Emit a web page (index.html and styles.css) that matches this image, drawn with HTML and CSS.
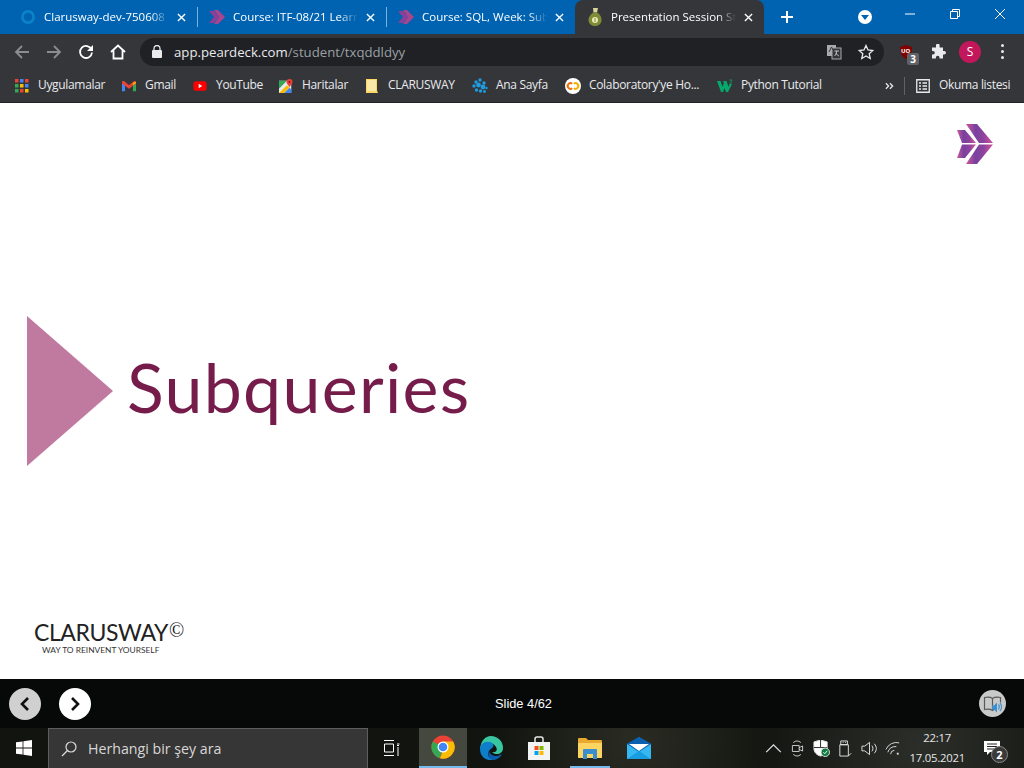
FILE: index.html
```html
<!DOCTYPE html>
<html lang="tr">
<head>
  <meta charset="utf-8">
  <title>Presentation Session Student</title>
  <link rel="stylesheet" href="styles.css">
</head>
<body>
<div class="screen">

  <!-- tabs -->
  <div class="tabstrip">
    <div class="tab">
      <svg class="fav" viewBox="0 0 16 16"><circle cx="8" cy="8" r="5.6" fill="none" stroke="#0a84c6" stroke-width="2.6"/></svg>
      <span class="tab-title">Clarusway-dev-750608</span>
      <svg class="tab-x" viewBox="0 0 10 10"><path d="M1 1l8 8M9 1l-8 8"/></svg>
    </div>
    <div class="tab sep">
      <svg class="fav" viewBox="0 0 16 16"><path d="M0 2h5l5 6-5 6H0l5-6z" fill="#8a4098"/><path d="M5 1h4l7 7-7 7H5l5-7z" fill="#a8458e"/></svg>
      <span class="tab-title">Course: ITF-08/21 Learn</span>
      <svg class="tab-x" viewBox="0 0 10 10"><path d="M1 1l8 8M9 1l-8 8"/></svg>
    </div>
    <div class="tab sep">
      <svg class="fav" viewBox="0 0 16 16"><path d="M0 2h5l5 6-5 6H0l5-6z" fill="#8a4098"/><path d="M5 1h4l7 7-7 7H5l5-7z" fill="#a8458e"/></svg>
      <span class="tab-title">Course: SQL, Week: Sub</span>
      <svg class="tab-x" viewBox="0 0 10 10"><path d="M1 1l8 8M9 1l-8 8"/></svg>
    </div>
    <div class="tab active">
      <svg class="fav pear" viewBox="0 0 14 18"><path d="M5 0h5L9 4.500H5.500z" fill="#d8d49a"/><path d="M5 4.500h4.500c3 2.500 4.500 5.500 4 8.500-.5 3-3.500 5-6.500 5S1 16 .5 13C0 10 2 7 5 4.500z" fill="#7f8c35"/><circle cx="7" cy="12" r="3" fill="#eceab8"/><path d="M7 10v4" stroke="#7f8c35"/></svg>
      <span class="tab-title">Presentation Session Stu</span>
      <svg class="tab-x" viewBox="0 0 10 10"><path d="M1 1l8 8M9 1l-8 8"/></svg>
    </div>
    <svg class="new-tab" viewBox="0 0 12 12"><path d="M6 0v12M0 6h12"/></svg>
    <div class="strip-right">
      <span class="profile-drop"><svg viewBox="0 0 14 14"><circle cx="7" cy="7" r="7" fill="#fff"/><path d="M3 5h8l-4 5z" fill="#0063b1"/></svg></span>
      <div class="winbtns">
        <svg viewBox="0 0 12 12"><path d="M1 6h10"/></svg>
        <svg viewBox="0 0 12 12"><path d="M1.500 3.500h7v7h-7zM3.500 3.500v-2h7v7h-2"/></svg>
        <svg viewBox="0 0 12 12"><path d="M1 1l10 10M11 1l-10 10"/></svg>
      </div>
    </div>
  </div>

  <!-- address bar -->
  <div class="toolbar">
    <svg class="nav" viewBox="0 0 16 16"><path class="dim" d="M15 8H2M8 2L2 8l6 6"/></svg>
    <svg class="nav" viewBox="0 0 16 16"><path class="dim" d="M1 8h13M8 2l6 6-6 6"/></svg>
    <svg class="nav" viewBox="0 0 16 16"><path d="M13.500 5.500A6 6 0 1 0 14 8.500"/><path class="solid" d="M15 1v6H9z"/></svg>
    <svg class="nav" viewBox="0 0 16 16"><path d="M1 8l7-6.500L15 8M3.500 6.500V14.500h9V6.500"/></svg>
    <div class="omnibox">
      <svg class="lock" viewBox="0 0 10 13"><path d="M2 5V3.500a3 3 0 0 1 6 0V5" fill="none" stroke="#e8eaed" stroke-width="1.300"/><rect y="5" width="10" height="8" rx="1" fill="#e8eaed"/></svg>
      <span class="url">app.peardeck.com<span class="url-path">/student/txqddldyy</span></span>
      <svg class="translate" viewBox="0 0 16 16"><rect x="1" y="1" width="9" height="11" fill="#a8abae"/><rect x="6" y="4" width="9" height="11" fill="#35363a" stroke="#a8abae"/><path d="M8.500 7h4.500M10.500 7c0 3-1 4-2 5M10 9c.5 1.500 2 2.500 3 3" fill="none" stroke="#c4c7c5"/><path d="M3 8l2.500-5L7 6" fill="none" stroke="#35363a"/></svg>
      <svg class="star" viewBox="0 0 16 16"><path d="M8 1.500l2 4.500 4.800.5-3.600 3.200 1 4.800L8 12l-4.200 2.500 1-4.800L1.200 6.500 6 6z"/></svg>
    </div>
    <div class="ext ublock">
      <svg viewBox="0 0 16 16"><path d="M8 1l6 2c0 6-1.500 9.500-6 12C3.500 12.500 2 9 2 3z" fill="#800000"/></svg>
      <span class="ub-text">UO</span>
      <span class="badge">3</span>
    </div>
    <svg class="ext puzzle" viewBox="0 0 16 16"><path d="M6 1.500a1.800 1.800 0 0 1 3.600 0V3.500h3.400V7h1.200a1.800 1.800 0 0 1 0 3.600H13V14.500H9.500v-1a1.800 1.800 0 0 0-3.600 0v1H2V10.500h1a1.800 1.800 0 0 0 0-3.600H2V3.500h4z" fill="#e8eaed"/></svg>
    <span class="avatar">S</span>
    <span class="dots"><i></i><i></i><i></i></span>
  </div>

  <!-- bookmarks -->
  <div class="bookmarks">
    <div class="bm">
      <svg viewBox="0 0 14 14"><path fill="#ea4335" d="M0 0h3.500v3.500H0z"/><path fill="#4285f4" d="M5 0h3.500v3.500H5z"/><path fill="#ea4335" d="M10 0h3.500v3.500H10z"/><path fill="#34a853" d="M0 5h3.500v3.500H0z"/><path fill="#fbbc04" d="M5 5h3.500v3.500H5z"/><path fill="#4285f4" d="M10 5h3.500v3.500H10z"/><path fill="#34a853" d="M0 10h3.500v3.500H0z"/><path fill="#ea4335" d="M5 10h3.500v3.500H5z"/><path fill="#fbbc04" d="M10 10h3.500v3.500H10z"/></svg>
      <span>Uygulamalar</span>
    </div>
    <div class="bm">
      <svg viewBox="0 0 16 12"><path fill="#4285f4" d="M0 2v10h3.500V5z"/><path fill="#34a853" d="M12.500 5v7H16V2z"/><path fill="#ea4335" d="M0 1.500C0 0 2 0 3 .8L8 5l5-4.200C14 0 16 0 16 1.500V3l-8 6-8-6z"/><path fill="#fbbc04" d="M12.500 5L16 2.500V1l-3.500 1.500z"/></svg>
      <span>Gmail</span>
    </div>
    <div class="bm">
      <svg viewBox="0 0 16 12"><rect width="15" height="11" x=".5" y=".5" rx="3" fill="#f00"/><path d="M6.500 3.500l4 2.500-4 2.500z" fill="#fff"/></svg>
      <span>YouTube</span>
    </div>
    <div class="bm">
      <svg viewBox="0 0 16 16"><path fill="#e8eaed" d="M0 2h14v14H0z"/><path fill="#34a853" d="M0 2h9L0 11z"/><path fill="#fbbc04" d="M0 16L9 7l3 3-6 6z"/><path fill="#4285f4" d="M6 16l6-6 2 2v4z"/><path fill="#ea4335" d="M12 0a3.500 3.500 0 0 1 3.500 3.500c0 2.200-2.300 3.500-3.500 6-1.200-2.500-3.500-3.800-3.500-6A3.500 3.500 0 0 1 12 0z"/><circle cx="12" cy="3.500" r="1.200" fill="#a50e0e"/></svg>
      <span>Haritalar</span>
    </div>
    <div class="bm folder">
      <svg viewBox="0 0 12 14"><path fill="#fdd663" d="M0 0h11v11.500L12 14H0z"/><path fill="#f8e9a6" d="M1 1h9v11H1z"/></svg>
      <span>CLARUSWAY</span>
    </div>
    <div class="bm">
      <svg viewBox="0 0 16 16"><g fill="#1f9be0"><circle cx="4" cy="4" r="1.700"/><circle cx="8" cy="2" r="1.700"/><circle cx="12" cy="5" r="1.700"/><circle cx="2" cy="8" r="1.700"/><circle cx="6.500" cy="7" r="2.400"/><circle cx="11" cy="9" r="2.400"/><circle cx="14.500" cy="10" r="1.200"/><circle cx="4.500" cy="12" r="1.700"/><circle cx="8.500" cy="13" r="1.700"/><circle cx="12.500" cy="13.500" r="1.400"/></g></svg>
      <span>Ana Sayfa</span>
    </div>
    <div class="bm">
      <svg viewBox="0 0 16 16"><circle cx="8" cy="8" r="8" fill="#fff"/><path d="M7.200 5.800a2.800 2.800 0 1 0 0 4.400" fill="none" stroke="#e8710a" stroke-width="2"/><path d="M8.800 5.800a2.800 2.800 0 1 1 0 4.400" fill="none" stroke="#f9ab00" stroke-width="2"/></svg>
      <span>Colaboratory'ye Ho...</span>
    </div>
    <div class="bm">
      <svg viewBox="0 0 16 14"><path fill="#04aa6d" d="M0 2h3.500l2 6 1.500-4-1-2h3.500l2 6 1-3h2.500L11 13H9L7.500 9 6 13H4z"/><path d="M12.500 1h2.500l-1 1.500a1 1 0 1 1-1.500 1.200" fill="none" stroke="#04aa6d" stroke-width=".8"/></svg>
      <span>Python Tutorial</span>
    </div>
    <div class="bm-more">
      <svg viewBox="0 0 10 8"><path d="M1 1l3 3-3 3M5.500 1l3 3-3 3"/></svg>
      <i class="bm-sep"></i>
      <svg class="reading" viewBox="0 0 14 14"><path d="M.75.75h12.500v12.500H.75zM3 4h2M3 7h2M3 10h2M6.500 4H11M6.500 7H11M6.500 10H11"/></svg>
      <span>Okuma listesi</span>
    </div>
  </div>

  <!-- slide -->
  <div class="slide">
    <svg class="corner-logo" viewBox="0 0 36 40">
      <defs>
        <linearGradient id="chev" x1="0" y1="0" x2="1" y2="0">
          <stop offset="0" stop-color="#d2559c"/><stop offset=".35" stop-color="#7742a0"/><stop offset=".65" stop-color="#8d429c"/><stop offset="1" stop-color="#d2559c"/>
        </linearGradient>
      </defs>
      <path d="M0 6h8l11 13H5z" fill="url(#chev)"/>
      <path d="M5 20.500h14L8 34H0z" fill="url(#chev)"/>
      <path d="M9 0h11l16 19H22z" fill="url(#chev)"/>
      <path d="M22 20.500h14L20 40H9z" fill="url(#chev)"/>
    </svg>
    <div class="title-row">
      <svg class="triangle" viewBox="0 0 86 150"><path d="M0 0l86 75L0 150z"/></svg>
      <h1>Subqueries</h1>
    </div>
    <div class="brand">
      <div class="brand-name">CLARUSWAY<span class="brand-c">©</span></div>
      <div class="brand-sub">WAY TO REINVENT YOURSELF</div>
    </div>
  </div>

  <!-- deck controls -->
  <div class="deckbar">
    <span class="round prev"><svg viewBox="0 0 10 16"><path d="M8 2L2 8l6 6"/></svg></span>
    <span class="round next"><svg viewBox="0 0 10 16"><path d="M2 2l6 6-6 6"/></svg></span>
    <span class="slide-num">Slide 4/62</span>
    <span class="round audio">
      <svg viewBox="0 0 20 20"><path d="M9.500 4.500C7.500 3 4.500 3 1.500 3.500v12c3-.5 6-.5 8 1 2-1.500 3-1.500 3-1.500M9.500 4.500C11.500 3 14.500 3 17.500 3.500v5M9.500 4.500v12" fill="none" stroke="#5a5a5a" stroke-width="1.200"/><path d="M9 11.500h2l3-3v10l-3-3H9z" fill="#3b8fd0"/><path d="M15.500 10.500c1 1 1 3 0 5M17 9c2 2 2 6 0 8" fill="none" stroke="#3b8fd0" stroke-width="1.100"/></svg>
    </span>
  </div>

  <!-- windows taskbar -->
  <div class="taskbar">
    <div class="start"><svg viewBox="0 0 16 16"><path d="M0 2.300l6.600-.9v6.200H0zM7.400 1.300L16 0v7.600H7.400zM0 8.400h6.600v6.200L0 13.700zM7.400 8.400H16V16l-8.600-1.200z" fill="#fff"/></svg></div>
    <div class="search">
      <svg viewBox="0 0 16 16"><circle cx="10" cy="6" r="5" /><path d="M6.500 9.500L1 15"/></svg>
      <span>Herhangi bir şey ara</span>
    </div>
    <div class="task view"><svg viewBox="0 0 16 16"><path d="M0 .5h10M0 15.500h10M.5 4h9v8h-9zM13 4h2.500M14 7v9M13 5.500h2"/></svg></div>
    <div class="task current">
      <svg viewBox="0 0 24 24"><circle cx="12" cy="12" r="11.500" fill="#ea4335"/><path d="M12 12L1.800 6.500A11.500 11.500 0 0 0 9 23.200z" fill="#34a853"/><path d="M12 6.500h10.200A11.500 11.500 0 0 1 9 23.200L13 13z" fill="#fbbc04"/><circle cx="12" cy="12" r="5.500" fill="#fff"/><circle cx="12" cy="12" r="4.300" fill="#4285f4"/></svg>
    </div>
    <div class="task">
      <svg viewBox="0 0 24 24"><path d="M12 0a12 12 0 0 1 12 12c0 4-3 6-6 6-2 0-4-.5-5-2 4 1 6-2 4-5-2-4-7-5-11-3-2 1-4 3-5 5C2 5 6 0 12 0z" fill="#38c6a2"/><path d="M1 13c0-4 4-8 9-7 4 0 6 4 3 6-3 2-5 5-3 9 1 1 3 2 4 3C6 25 1 20 1 13z" fill="#0d7ec9"/><path d="M14 24c3 0 7-2 9-6-3 2-7 3-10 1-2-1-3-3-3-5-1 4 0 9 4 10z" fill="#0a5eb0"/></svg>
    </div>
    <div class="task">
      <svg viewBox="0 0 24 24"><path d="M8 6V3a2 2 0 0 1 2-2h4a2 2 0 0 1 2 2v3" fill="none" stroke="#e8e8e8" stroke-width="1.500"/><path d="M1 6h22v18H1z" fill="#f3f3f3"/><path d="M7.500 10h4v4h-4z" fill="#f25022"/><path d="M12.500 10h4v4h-4z" fill="#7fba00"/><path d="M7.500 15h4v4h-4z" fill="#00a4ef"/><path d="M12.500 15h4v4h-4z" fill="#ffb900"/></svg>
    </div>
    <div class="task opened">
      <svg viewBox="0 0 24 22"><path d="M0 2a1 1 0 0 1 1-1h7l2 2h13a1 1 0 0 1 1 1v16a1 1 0 0 1-1 1H1a1 1 0 0 1-1-1z" fill="#e8a92e"/><path d="M0 6h24v14a1 1 0 0 1-1 1H1a1 1 0 0 1-1-1z" fill="#fcd462"/><path d="M6 12h12a1 1 0 0 1 1 1v9h-4v-5H9v5H5v-9a1 1 0 0 1 1-1z" fill="#3a8ecf"/></svg>
    </div>
    <div class="task">
      <svg viewBox="0 0 24 22"><path d="M12 0l12 7v15H0V7z" fill="#0f78d4"/><path d="M0 7h24v15H0z" fill="#35b8f1"/><path d="M0 7l12 8 12-8v0L12 0z" fill="#0a5fb0"/><path d="M2 7h20l-10 7z" fill="#fff"/><path d="M0 22l12-8 12 8z" fill="#1a9de0"/></svg>
    </div>
    <div class="tray">
      <svg class="tray-ic" viewBox="0 0 14 14"><path d="M1 10l6-6 6 6"/></svg>
      <svg class="tray-ic" viewBox="0 0 16 20"><path d="M3 3a7 7 0 0 1 9 0M3 17a7 7 0 0 0 9 0M2 6.500h8v7H2zM10 9l4-2v6l-4-2"/></svg>
      <svg class="tray-ic shield" viewBox="0 0 16 18"><path d="M7 0l7 2v7c0 4-3 7-7 8-4-1-7-4-7-8V2z" fill="#fff"/><path d="M7 0v8H0M7 8h7" stroke="#222" fill="none"/><circle cx="12" cy="13" r="4.500" fill="#107c41"/><path d="M10 13l1.500 1.500 2.500-3" stroke="#fff" fill="none"/></svg>
      <svg class="tray-ic" viewBox="0 0 16 18"><path d="M3 1h7v4H3zM2 5h9v12H2zM5 2.500h1M7.500 2.500h1M11 17l3-3"/></svg>
      <svg class="tray-ic" viewBox="0 0 18 18"><path d="M1 6.500h3l5-4v13l-5-4H1zM11.500 6c1.500 1.500 1.500 4.500 0 6M14 4c3 3 3 7 0 10"/></svg>
      <svg class="tray-ic" viewBox="0 0 18 18"><path d="M1 10A12 12 0 0 1 15 3M3 13a8 8 0 0 1 9-6M6 15a4 4 0 0 1 4-4" stroke="#ddd"/><rect x="12.500" y="13.500" width="2" height="2" fill="#ddd" stroke="none"/></svg>
      <div class="clock"><div>22:17</div><div>17.05.2021</div></div>
      <div class="notify">
        <svg viewBox="0 0 16 14"><path d="M0 0h16v11H6l-3 3v-3H0z" fill="#fff"/><path d="M3 3h10M3 5.500h10M3 8h7" stroke="#222"/></svg>
        <span class="notify-n">2</span>
      </div>
    </div>
  </div>
</div>
</body>
</html>
```

FILE: styles.css
```css
html, body { margin: 0; padding: 0; }
body { font-family: "Open Sans", "Noto Sans", sans-serif; font-size: 12px; color: #e8eaed; }
svg { display: block; flex: none; }
h1 { margin: 0; }

.screen { width: 1024px; height: 768px; display: flex; flex-direction: column; overflow: hidden; }

/* tabs */
.tabstrip { height: 34px; background: #0063b1; display: flex; padding-left: 8px; flex: none; }
.tab { width: 189px; height: 34px; display: flex; align-items: center; padding: 0 8px 0 12px; box-sizing: border-box; position: relative; }
.tab.sep::before { content: ""; position: absolute; left: 0; top: 7px; height: 20px; width: 1px; background: #7fb0d8; }
.tab.active { background: #35363a; border-radius: 8px 8px 0 0; }
.fav { width: 16px; height: 16px; margin-right: 8px; }
.fav.pear { height: 18px; }
.tab-title { flex: 1; overflow: hidden; white-space: nowrap; font-size: 11.5px; padding-bottom: 2px; color: #fff; -webkit-mask-image: linear-gradient(90deg, #000 85%, transparent); mask-image: linear-gradient(90deg, #000 85%, transparent); }
.tab-x { width: 9px; height: 9px; margin: 0 3px 0 8px; fill: none; stroke: #fff; stroke-width: 1.500; }
.new-tab { width: 12px; height: 12px; margin: 11px 0 0 17px; fill: none; stroke: #fff; stroke-width: 2; }
.strip-right { margin-left: auto; display: flex; }
.profile-drop { width: 14px; height: 14px; margin-top: 10px; }
.winbtns { display: flex; gap: 33px; margin: 8px 18px 0 32px; }
.winbtns svg { width: 12px; height: 12px; fill: none; stroke: #fff; stroke-width: 1; }

/* address bar */
.toolbar { height: 35px; background: #35363a; display: flex; align-items: center; padding-left: 14px; flex: none; }
.nav { width: 16px; height: 16px; margin-right: 16px; fill: none; stroke: #fff; stroke-width: 1.800; }
.nav .dim { stroke: #8b8d90; }
.nav .solid { fill: #fff; stroke: none; }
.omnibox { width: 744px; height: 28px; margin-left: -2px; background: #202124; border-radius: 14px; display: flex; align-items: center; box-sizing: border-box; padding-left: 12px; }
.lock { width: 10px; height: 13px; margin-right: 12px; }
.url { font-size: 13.2px; color: #e8eaed; flex: 1; }
.url-path { color: #9aa0a6; }
.translate { width: 16px; height: 16px; margin-right: 16px; }
.star { width: 16px; height: 16px; margin-right: 10px; fill: none; stroke: #e8eaed; stroke-width: 1.300; }
.ext { width: 16px; height: 16px; }
.ublock { position: relative; margin-left: 14px; }
.ublock svg { width: 16px; height: 16px; }
.ub-text { position: absolute; left: 3px; top: 3px; font-size: 6px; line-height: 8px; color: #fff; font-weight: 700; }
.badge { position: absolute; left: 9px; top: 9px; width: 12px; height: 12px; line-height: 12px; text-align: center; background: #5f6368; border-radius: 2px; font-size: 10px; font-weight: 700; color: #fff; }
.puzzle { margin-left: 16px; }
.avatar { width: 22px; height: 22px; margin-left: 13px; border-radius: 50%; background: #c2185b; color: #fff; font-size: 12px; line-height: 22px; text-align: center; }
.dots { margin-left: 20px; display: flex; flex-direction: column; gap: 3px; }
.dots i { width: 3px; height: 3px; border-radius: 50%; background: #e8eaed; }

/* bookmarks */
.bookmarks { height: 34px; background: #35363a; border-bottom: 1px solid #232427; box-sizing: border-box; display: grid; grid-template-columns: 107px 71px 86px 87px 106px 93px 152px 168px 1fr; align-items: center; padding-left: 15px; flex: none; }
.bm { display: flex; align-items: center; gap: 9px; white-space: nowrap; }
.bm svg { width: 14px; height: 14px; }
.bm:nth-child(6), .bm:nth-child(7), .bm:nth-child(8) { gap: 8px; }
.bm:nth-child(6) svg, .bm:nth-child(7) svg, .bm:nth-child(8) svg { width: 16px; height: 16px; }
.bm.folder { gap: 10px; }
.bm.folder svg { width: 12px; height: 14px; }
.bm span, .bm-more span { font-size: 12px; letter-spacing: -.33px; padding-bottom: 2px; }
.bm-more { display: flex; align-items: center; }
.bm-more svg { width: 9px; height: 8px; fill: none; stroke: #e8eaed; stroke-width: 1.400; }
.bm-more svg.reading { width: 14px; height: 14px; margin: 0 9px 0 0; stroke-width: 1.300; }
.bm-sep { width: 1px; height: 18px; background: #5f6368; margin: 0 11px 0 10px; }

/* slide */
.slide { flex: 1; background: #fff; display: flex; flex-direction: column; padding: 21px 31px 24px 27px; box-sizing: border-box; }
.corner-logo { width: 36px; height: 40px; align-self: flex-end; }
.title-row { display: flex; align-items: center; gap: 14px; margin-top: 152px; }
.triangle { width: 86px; height: 150px; fill: #c17a9f; }
h1 { font-family: "Lato", sans-serif; font-size: 68px; font-weight: 400; color: #751c4a; line-height: 80px; letter-spacing: 1.3px; padding-bottom: 8px; }
.brand { margin: auto 0 0 7px; color: #222; }
.brand-name { font-family: "Lato", sans-serif; font-size: 23px; line-height: 22px; letter-spacing: -.4px; font-weight: 400; }
.brand-c { font-family: "Liberation Serif", serif; font-size: 20px; vertical-align: 4px; line-height: 0; margin-left: 1px; }
.brand-sub { font-family: "Lato", sans-serif; font-size: 8.4px; line-height: 10px; margin: 2px 0 0 8px; color: #333; }

/* deck controls */
.deckbar { height: 49px; background: #070909; display: flex; align-items: center; padding-left: 9px; flex: none; position: relative; }
.round { width: 32px; height: 32px; border-radius: 50%; display: flex; align-items: center; justify-content: center; background: #fff; }
.round svg { width: 10px; height: 16px; fill: none; stroke: #111; stroke-width: 2.600; }
.prev { background: #cfd0cf; }
.next { margin-left: 18px; }
.slide-num { font-family: "Liberation Sans", sans-serif; font-size: 12.8px; color: #fff; margin-left: 404px; }
.audio { width: 27px; height: 27px; margin-left: auto; margin-right: 18px; background: #c8c9c9; }
.round.audio svg { width: 20px; height: 20px; fill: none; stroke: none; }

/* windows taskbar */
.taskbar { height: 40px; flex: none; display: flex; color: #fff; background: radial-gradient(circle at 62% 30%, #2a2c24, transparent 22%), radial-gradient(circle at 90% 40%, #2c2e2a, transparent 18%), #12150f; }
.start { width: 48px; display: flex; align-items: center; justify-content: center; }
.start svg { width: 16px; height: 16px; }
.search { width: 320px; box-sizing: border-box; background: #363636; border: 1px solid #5e5e5e; border-bottom: 0; display: flex; align-items: center; padding-left: 12px; gap: 11px; }
.search svg { width: 16px; height: 16px; fill: none; stroke: #ddd; stroke-width: 1.200; }
.search span { font-size: 14.200px; color: #d8d8d8; }
.task { width: 48px; display: flex; align-items: center; justify-content: center; box-sizing: border-box; }
.task svg { width: 24px; height: 24px; }
.task.view { width: 51px; padding-right: 3px; }
.task.view svg { width: 16px; height: 16px; fill: none; stroke: #fff; stroke-width: 1; }
.task.current { background: #44483f; border-bottom: 2px solid #76b9ed; }
.task.opened { width: 40px; margin: 0 5px 0 7px; box-shadow: inset 0 -2px 0 #76b9ed; }
.tray { margin-left: auto; display: flex; align-items: center; gap: 7px; padding-right: 24px; }
.tray-ic { width: 17px; height: 17px; fill: none; stroke: #e4e4e4; stroke-width: 1; }
.clock { text-align: center; font-size: 11.300px; line-height: 20px; color: #e6e6e6; margin: 0 12px 0 0; letter-spacing: -.2px; }
.notify { position: relative; width: 16px; height: 14px; }
.notify svg { width: 16px; height: 14px; }
.notify-n { position: absolute; left: 7px; top: 5px; width: 15px; height: 15px; border-radius: 50%; background: #3a3a3a; border: 1px solid #888; font-size: 11px; line-height: 15px; text-align: center; font-weight: 700; }
```
